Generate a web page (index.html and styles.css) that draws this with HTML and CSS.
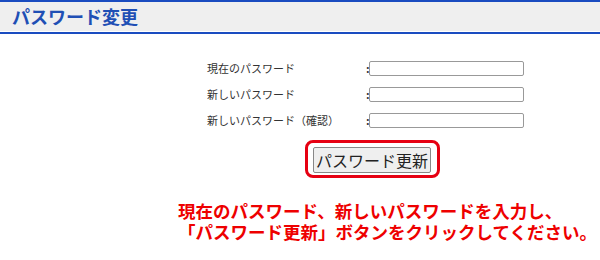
FILE: index.html
```html
<!DOCTYPE html>
<html lang="ja">
<head>
    <meta charset="UTF-8">
    <title>パスワード変更</title>
    <link rel="stylesheet" href="styles.css">
</head>
<body>
    <div class="title-bar">
        <h1 class="title">パスワード変更</h1>
    </div>

    <form class="pw-form">
        <div class="pw-grid">
            <label for="currentPw">現在のパスワード</label>
            <span class="colon">:</span>
            <input type="password" id="currentPw">

            <label for="newPw">新しいパスワード</label>
            <span class="colon">:</span>
            <input type="password" id="newPw">

            <label for="confirmPw">新しいパスワード（確認）</label>
            <span class="colon">:</span>
            <input type="password" id="confirmPw">
        </div>

        <div class="submit-row">
            <div class="highlight">
                <button type="button" class="submit">パスワード更新</button>
            </div>
        </div>
    </form>

    <p class="note">
        現在のパスワード、新しいパスワードを入力し、<br>
        「パスワード更新」ボタンをクリックしてください。
    </p>
</body>
</html>
```

FILE: styles.css
```css
body {
    margin: 0;
    padding: 0;
    background-color: #fff;
    font-family: "Noto Sans CJK JP", "Noto Sans", sans-serif;
    color: #333;
}
.title-bar {
    border-top: 2px solid #1a4cc0;
    border-bottom: 2px solid #1a4cc0;
    padding-bottom: 1px;
}
.title {
    margin: 0;
    height: 29px;
    line-height: 29px;
    padding-left: 12px;
    background-color: #efefef;
    color: #1f4fb5;
    font-size: 18px;
    font-weight: bold;
}
.pw-form {
    margin: 26px 0 0 207px;
}
.pw-grid {
    display: grid;
    grid-template-columns: 159px 3px 155px;
    row-gap: 10px;
    align-items: center;
    font-size: 11px;
    line-height: 16px;
}
.pw-grid label {
    color: #333;
}
.colon {
    font-weight: bold;
    color: #333;
}
.pw-grid input {
    box-sizing: border-box;
    width: 155px;
    height: 15px;
    margin: 0;
    padding: 0;
    border: 1px solid #999;
    border-radius: 2px;
}
.submit-row {
    margin: 12px 0 0 98px;
}
.highlight {
    display: inline-block;
    padding: 4px 6px 2px 5px;
    border: 3px solid #e60012;
    border-radius: 8px;
}
.submit {
    display: block;
    height: 26px;
    padding: 0 2px;
    border: 1px solid #888;
    border-radius: 2px;
    background-color: #efefef;
    color: #222;
    font-family: "Noto Sans CJK JP", sans-serif;
    font-size: 16px;
    line-height: 24px;
}
.note {
    margin: 22px 0 0 178px;
    color: #ee0000;
    font-size: 17.5px;
    font-weight: bold;
    line-height: 21px;
    white-space: nowrap;
}
```
